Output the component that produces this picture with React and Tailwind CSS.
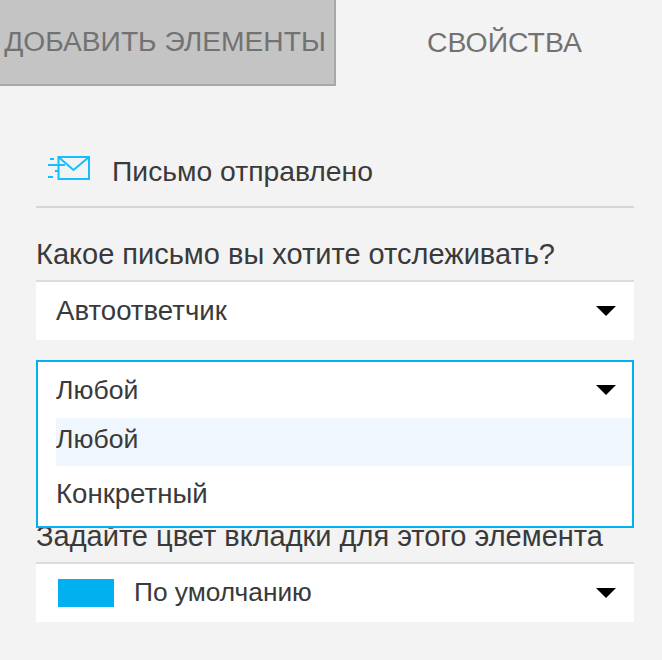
const font = { fontFamily: '"Liberation Sans", Arial, sans-serif' };

function Caret() {
  return <span className="w-0 h-0 border-x-[10px] border-x-transparent border-t-[10px] border-t-black" />;
}

function MailIcon() {
  return (
    <svg width="44" height="26" viewBox="0 0 44 26" fill="none" stroke="#14beff" strokeWidth="2" className="mb-[6px]">
      <rect x="11.5" y="2" width="30.5" height="22" />
      <path d="M11.5 2 L26.5 15 L42 2" />
      <path d="M3 4 H7 M1 10 H18 M8 16 H12 M1 22 H6" />
    </svg>
  );
}

function Select({ children }) {
  return (
    <div className="h-[60px] bg-white border-t-2 border-[#dcdcdc] flex items-center justify-between pl-[20px] pr-[18px] text-[27.6px] text-[#3a3a3a]">
      <div className="flex items-center">{children}</div>
      <Caret />
    </div>
  );
}

export default function App() {
  return (
    <div className="w-[662px] h-[660px] bg-[#f3f3f3] overflow-hidden" style={font}>
      <div className="flex h-[86px]">
        <div className="w-[336px] bg-[#c4c4c4] border-b-2 border-r-2 border-[#a8a8a8] flex items-center justify-center pr-[4px] pb-[2px] text-[28.2px] text-[#727272] whitespace-nowrap">
          ДОБАВИТЬ ЭЛЕМЕНТЫ
        </div>
        <div className="flex-1 flex items-center justify-center pl-[11px] pb-[2px] text-[28.4px] text-[#727272]">СВОЙСТВА</div>
      </div>

      <div className="pl-[36px] pr-[28px]">
        <div className="mt-[64px] h-[58px] pb-[14px] border-b-2 border-[#d6d6d6] flex items-center pl-[11px]">
          <MailIcon />
          <span className="ml-[21px] text-[28.3px] text-[#3a3a3a]">Письмо отправлено</span>
        </div>

        <div className="mt-[30px] h-[42px] text-[29px] leading-[32px] text-[#3a3a3a] whitespace-nowrap">
          Какое письмо вы хотите отслеживать?
        </div>
        <Select>Автоответчик</Select>

        <div className="relative mt-[20px] h-[202px]">
          <div className="absolute inset-x-0 top-0 h-[168px] z-10 bg-white border-2 border-[#00b0ef] text-[27.6px] text-[#3a3a3a]">
            <div className="h-[56px] flex items-center justify-between pl-[18px] pr-[16px]">
              <span className="text-[26.6px] pt-[2px]">Любой</span>
              <Caret />
            </div>
            <div className="ml-[18px] h-[48px] bg-[#eff6fd] flex items-center pb-[4px] text-[26.6px]">Любой</div>
            <div className="ml-[18px] h-[56px] flex items-center">Конкретный</div>
          </div>
          <div className="absolute left-0 top-[160px] text-[29px] leading-[32px] text-[#3a3a3a] whitespace-nowrap">
            Задайте цвет вкладки для этого элемента
          </div>
        </div>

        <Select>
          <span className="w-[56px] h-[28px] bg-[#00b0ef] ml-[2px] mr-[20px]" />
          <span className="text-[26.3px]">По умолчанию</span>
        </Select>
      </div>
    </div>
  );
}
